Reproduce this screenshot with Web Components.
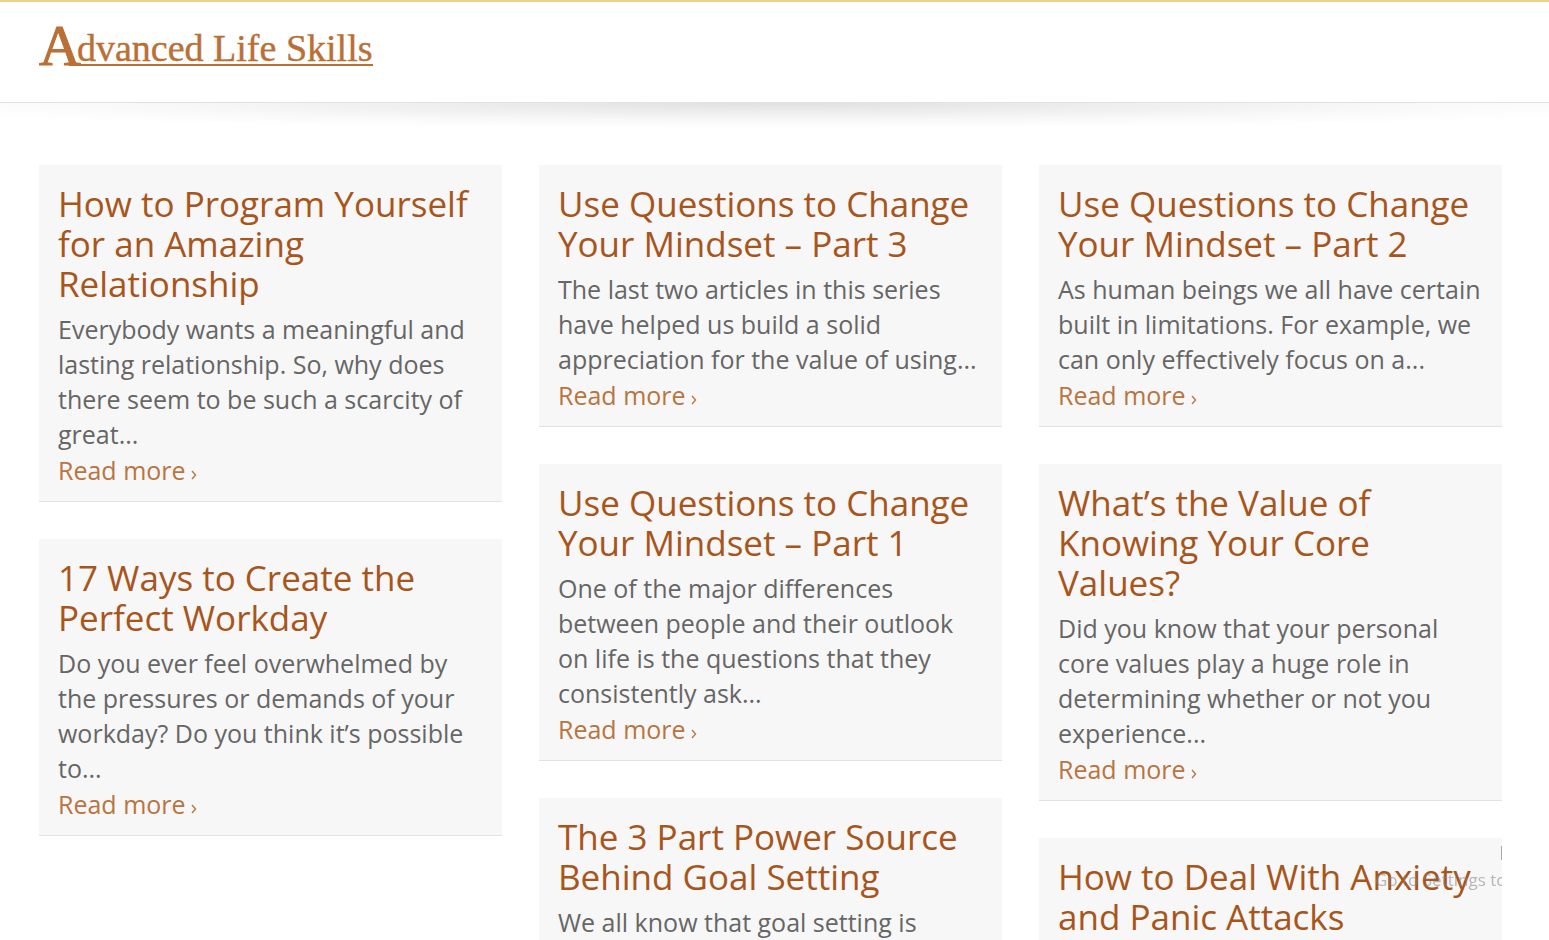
<!DOCTYPE html>
<html lang="en">
<head>
<meta charset="utf-8">
<title>Advanced Life Skills</title>
<style>
html { scrollbar-width: none; background: #fff; }
body { margin: 0; font-family: "Open Sans", "Noto Sans", sans-serif; color: #666; }
</style>
</head>
<body>
<site-header></site-header>
<article-grid>
  <article-column>
    <article-card><span slot="title">How to Program Yourself for an Amazing Relationship</span>Everybody wants a meaningful and lasting relationship. So, why does there seem to be such a scarcity of great...</article-card>
    <article-card><span slot="title">17 Ways to Create the Perfect Workday</span>Do you ever feel overwhelmed by the pressures or demands of your workday? Do you think it’s possible to...</article-card>
  </article-column>
  <article-column>
    <article-card><span slot="title">Use Questions to Change Your Mindset – Part 3</span>The last two articles in this series have helped us build a solid appreciation for the value of using...</article-card>
    <article-card><span slot="title">Use Questions to Change Your Mindset – Part 1</span>One of the major differences between people and their outlook on life is the questions that they consistently ask...</article-card>
    <article-card><span slot="title">The 3 Part Power Source Behind Goal Setting</span>We all know that goal setting is</article-card>
  </article-column>
  <article-column>
    <article-card><span slot="title">Use Questions to Change Your Mindset – Part 2</span>As human beings we all have certain built in limitations. For example, we can only effectively focus on a...</article-card>
    <article-card><span slot="title">What’s the Value of Knowing Your Core Values?</span>Did you know that your personal core values play a huge role in determining whether or not you experience...</article-card>
    <article-card><span slot="title">How to Deal With Anxiety and Panic Attacks</span></article-card>
  </article-column>
</article-grid>
<system-notice>Go to Settings to</system-notice>

<script>
const define = (name, html) => customElements.define(name, class extends HTMLElement {
  constructor() {
    super();
    this.attachShadow({ mode: "open" }).innerHTML = html;
  }
});

define("site-header", `
<style>
:host { display: block; }
header { border-top: 2px solid #ecd28c; border-bottom: 1px solid #e2e2e2; padding: 9px 39px; }
a { display: block; width: 336px; height: 82px; }
svg { display: block; overflow: visible; }
text { font-family: "Liberation Serif", serif; fill: #b96f35; stroke: #b96f35; }
.initial { font-size: 58px; stroke-width: 1; }
.rest { font-size: 38px; stroke-width: 0.4; }
.shadow {
  height: 26px;
  background: radial-gradient(ellipse 60% 100% at 50% 0, #e0e0e0 0%, #ededed 35%, #f9f9f9 70%, #fff 100%);
}
</style>
<header>
  <a href="#" aria-label="Advanced Life Skills">
    <svg width="336" height="82" viewBox="0 0 336 82">
      <text class="initial" x="0" y="54">A</text>
      <text class="rest" x="38" y="50">dvanced Life Skills</text>
      <path d="M30 54H334" stroke="#b96f35" stroke-width="2"/>
    </svg>
  </a>
</header>
<div class="shadow"></div>`);

define("article-grid", `
<style>
:host { display: block; }
main { display: grid; grid-template-columns: repeat(3, minmax(0, 1fr)); gap: 37px; padding: 36px 47px 37px 39px; }
</style>
<main><slot></slot></main>`);

define("article-column", `
<style>
:host { display: flex; flex-direction: column; gap: 37px; }
</style>
<slot></slot>`);

define("article-card", `
<style>
:host { display: block; }
article { background: #f7f7f7; border-bottom: 1px solid #e2e2e2; padding: 19px 19px 13px; }
h2 { margin: 0 0 8px; font-size: 35px; line-height: 40px; font-weight: 400; }
h2 a { color: #a8551c; }
a { text-decoration: none; }
p { margin: 0; font-size: 25px; line-height: 35px; }
.more { display: block; font-size: 25px; line-height: 36px; color: #b9743f; }
.more svg { margin-left: 5px; }
</style>
<article>
  <h2><a href="#"><slot name="title"></slot></a></h2>
  <p><slot></slot></p>
  <a class="more" href="#">Read more<svg width="6" height="10" viewBox="0 0 6 10" fill="none" stroke="currentColor" stroke-width="1.3"><path d="M1 1L4.6 5L1 9"/></svg></a>
</article>`);

define("system-notice", `
<style>
:host {
  position: fixed; right: 47px; bottom: 46px; width: 127px; overflow: hidden;
  white-space: nowrap; pointer-events: none;
  font-size: 17px; line-height: 28px; color: rgba(130, 130, 130, 0.55);
}
i { display: block; width: 1px; height: 14px; margin: 0 0 6px auto; background: #aaa; }
</style>
<i></i><slot></slot>`);
</script>
</body>
</html>
